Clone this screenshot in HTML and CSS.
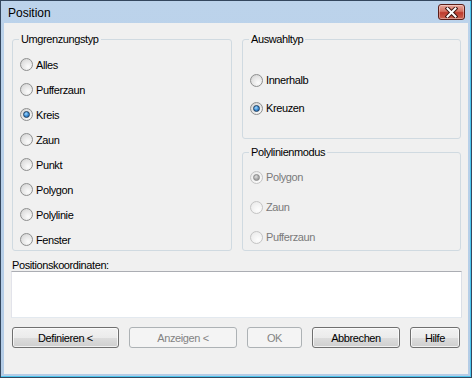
FILE: index.html
```html
<!DOCTYPE html>
<html lang="de">
<head>
    <meta charset="UTF-8">
    <title>Position</title>
    <link rel="stylesheet" href="styles.css">
</head>
<body>
    <div class="window">
        <div class="titlebar">
            <span class="title">Position</span>
            <button class="close" title="Schließen">
                <svg width="13" height="11" viewBox="0 0 13 11">
                    <path d="M2.5 1.5 L10.5 9.5 M10.5 1.5 L2.5 9.5" stroke="#3b1410" stroke-width="4" stroke-linecap="square"/>
                    <path d="M2.5 1.5 L10.5 9.5 M10.5 1.5 L2.5 9.5" stroke="#fff" stroke-width="2" stroke-linecap="square"/>
                </svg>
            </button>
        </div>
        <div class="client">
            <div class="groups">
                <fieldset class="group group-main">
                    <legend>Umgrenzungstyp</legend>
                    <label class="option"><span class="radio"></span>Alles</label>
                    <label class="option"><span class="radio"></span>Pufferzaun</label>
                    <label class="option"><span class="radio checked"></span>Kreis</label>
                    <label class="option"><span class="radio"></span>Zaun</label>
                    <label class="option"><span class="radio"></span>Punkt</label>
                    <label class="option"><span class="radio"></span>Polygon</label>
                    <label class="option"><span class="radio"></span>Polylinie</label>
                    <label class="option"><span class="radio"></span>Fenster</label>
                </fieldset>
                <div class="side">
                    <fieldset class="group group-select">
                        <legend>Auswahltyp</legend>
                        <label class="option"><span class="radio"></span>Innerhalb</label>
                        <label class="option"><span class="radio checked"></span>Kreuzen</label>
                    </fieldset>
                    <fieldset class="group group-mode">
                        <legend>Polylinienmodus</legend>
                        <label class="option disabled"><span class="radio checked"></span>Polygon</label>
                        <label class="option disabled"><span class="radio"></span>Zaun</label>
                        <label class="option disabled"><span class="radio"></span>Pufferzaun</label>
                    </fieldset>
                </div>
            </div>
            <div class="coords-label">Positionskoordinaten:</div>
            <div class="coords"></div>
            <div class="buttons">
                <button class="btn btn-define">Definieren &lt;</button>
                <button class="btn btn-show" disabled>Anzeigen &lt;</button>
                <button class="btn btn-ok" disabled>OK</button>
                <button class="btn btn-cancel">Abbrechen</button>
                <button class="btn btn-help">Hilfe</button>
            </div>
        </div>
    </div>
</body>
</html>
```

FILE: styles.css
```css
body {
    margin: 0;
    padding: 0;
    font-family: "Liberation Sans", Arial, sans-serif;
    font-size: 11px;
    letter-spacing: -0.4px;
    color: #000;
    background-color: #fff;
}
.window {
    width: 472px;
    height: 378px;
    box-sizing: border-box;
    border: 1px solid #34475e;
    background: linear-gradient(#bcd3eb, #b4cce6);
    box-shadow: inset -1px -1px 0 #4cc6ef;
    display: flex;
    flex-direction: column;
}
.titlebar {
    height: 22px;
    display: flex;
    align-items: flex-start;
    justify-content: space-between;
    padding: 0 6px 0 7px;
}
.title {
    font-size: 12px;
    line-height: 14px;
    letter-spacing: 0;
    margin-top: 5px;
    color: #000;
}
.close {
    width: 27px;
    height: 16px;
    margin-top: 3px;
    padding: 0;
    border: 1px solid #5b1d17;
    border-radius: 3px;
    background: linear-gradient(#e8a89d, #d47060 45%, #bd3a2c 55%, #cc6452);
    box-shadow: inset 0 0 0 1px rgba(255, 255, 255, 0.35);
    display: flex;
    align-items: center;
    justify-content: center;
}
.client {
    flex: 1;
    margin: 0 3px 3px 3px;
    background-color: #f0f0f0;
    padding: 10px 6px 0 7px;
}
.groups {
    display: grid;
    grid-template-columns: 220px 219px;
    column-gap: 10px;
    margin-left: 1px;
}
.side {
    display: flex;
    flex-direction: column;
    gap: 7px;
}
.group {
    margin: 0;
    box-sizing: border-box;
    border: 1px solid #d0dae1;
    border-radius: 3px;
    padding: 0 0 0 7px;
    min-width: 0;
}
.group legend {
    padding: 0 2px;
    margin-left: -1px;
    line-height: 13px;
}
.group-main {
    height: 218px;
    padding-top: 6px;
}
.group-select {
    height: 106px;
    padding-top: 20px;
}
.group-select .option {
    height: 28px;
}
.group-mode {
    height: 105px;
    padding-top: 3px;
}
.group-mode .option {
    height: 30px;
}
.option {
    display: flex;
    align-items: center;
    height: 25px;
}
.option.disabled {
    color: #7a7a7a;
}
.radio {
    width: 13px;
    height: 13px;
    box-sizing: border-box;
    border-radius: 50%;
    border: 1px solid #8e8f8f;
    background: radial-gradient(circle at 65% 70%, #fcfcfc, #e2e2e2 60%, #c9c9c9);
    margin-right: 3px;
    flex-shrink: 0;
    display: flex;
    align-items: center;
    justify-content: center;
}
.radio.checked::after {
    content: "";
    width: 7px;
    height: 7px;
    box-sizing: border-box;
    border-radius: 50%;
    border: 1px solid #1d3e5f;
    background: radial-gradient(circle at 40% 35%, #a9dcff, #3d8ed6 50%, #1b5da6);
}
.disabled .radio {
    border-color: #c4c4c4;
    background: radial-gradient(circle at 65% 70%, #fdfdfd, #f0f0f0 60%, #e4e4e4);
}
.disabled .radio.checked::after {
    border-color: #8a8a8a;
    background: radial-gradient(circle at 40% 35%, #e0e0e0, #a8a8a8 55%, #8f8f8f);
}
.coords-label {
    line-height: 12px;
    margin-top: 8px;
    margin-left: 1px;
}
.coords {
    width: 451px;
    height: 47px;
    box-sizing: border-box;
    margin-left: 0;
    background-color: #fff;
    border: 1px solid #abadb3;
    border-color: #abadb3 #dbdfe6 #e3e9ef #e2e3ea;
}
.buttons {
    display: flex;
    gap: 10px;
    margin-top: 9px;
    margin-left: 1px;
}
.btn {
    height: 21px;
    box-sizing: border-box;
    padding: 0;
    font-family: inherit;
    font-size: 11px;
    letter-spacing: -0.4px;
    color: #000;
    border: 1px solid #707070;
    border-radius: 3px;
    background: linear-gradient(#f2f2f2, #ebebeb 50%, #dddddd 50%, #cfcfcf);
    box-shadow: inset 0 0 0 1px rgba(255, 255, 255, 0.7);
}
.btn:disabled {
    color: #838383;
    border-color: #adb2b5;
    background: #f4f4f4;
    box-shadow: none;
}
.btn-define { width: 107px; }
.btn-show { width: 108px; }
.btn-ok { width: 55px; }
.btn-cancel { width: 88px; }
.btn-help { width: 50px; }
```
